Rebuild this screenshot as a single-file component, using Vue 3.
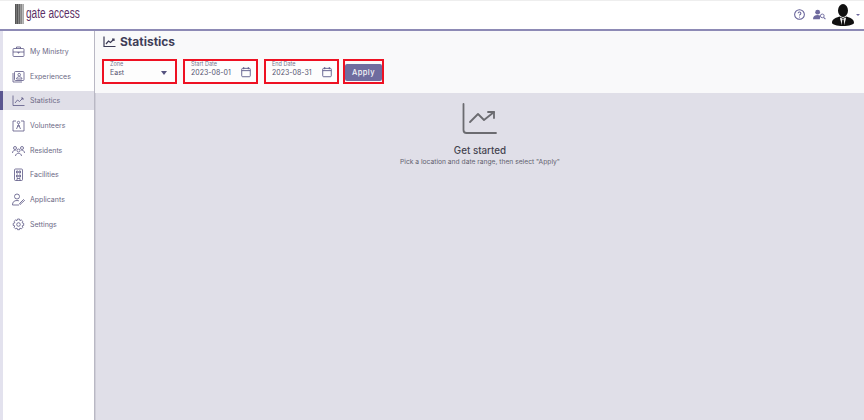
<script setup>
const items = [
  { label: 'My Ministry', icon: 'brief' },
  { label: 'Experiences', icon: 'exp' },
  { label: 'Statistics', icon: 'chart', active: true },
  { label: 'Volunteers', icon: 'vol' },
  { label: 'Residents', icon: 'res' },
  { label: 'Facilities', icon: 'fac' },
  { label: 'Applicants', icon: 'app' },
  { label: 'Settings', icon: 'set' },
]
const bars = ['#555', '#777', '#555', '#888', '#666', '#999', '#888', '#bbb', '#aaa']
</script>

<template>
  <div class="page">
    <header class="top">
      <div class="logo">
        <div class="bars"><i v-for="(b, i) in bars" :key="i" :style="{ background: b }"></i></div>
        <span class="logotext">gate access</span>
      </div>
      <div class="topright">
        <svg class="help" width="11" height="11" viewBox="0 0 12 12" fill="none" stroke="#5f5b94" stroke-width="1.100">
          <circle cx="6" cy="6" r="5.300" />
          <path d="M4.500 4.700a1.500 1.500 0 1 1 2.300 1.300c-.6.4-.8.6-.8 1.200" />
          <path d="M6 8.400v.9" />
        </svg>
        <svg class="usr" width="13" height="11" viewBox="0 0 14 11" fill="#6e6a9e">
          <circle cx="5" cy="3" r="2.600" />
          <path d="M0 10.500c0-3 2-4.400 5-4.400 1.200 0 2 .2 2.800.7l-.4 3.700z" />
          <circle cx="10" cy="7" r="2" fill="#fff" stroke="#6e6a9e" stroke-width="1" />
          <path d="M11.400 8.500l2 2" stroke="#6e6a9e" stroke-width="1.100" />
        </svg>
        <svg class="avatar" width="22" height="22" viewBox="0 0 22 22">
          <path d="M0 19c0-3.500 2-4.500 7.500-6.500L11 14l3.500-1.500C20 14.500 22 15.500 22 19c0 1.500-5 3-11 3S0 20.500 0 19z" fill="#111" />
          <ellipse cx="11" cy="6.500" rx="5" ry="6.500" fill="#111" />
          <path d="M8.500 13.500L11 15l2.500-1.500.5 1-2 7h-2l-2-7z" fill="#eee" />
          <path d="M10.300 15.500h1.400l.7 6.500h-2.800z" fill="#111" />
        </svg>
        <span class="caret small"></span>
      </div>
    </header>
    <div class="body">
      <aside class="side">
        <div v-for="it in items" :key="it.label" class="item" :class="{ active: it.active }">
          <svg class="ic" width="13" height="13" viewBox="0 0 13 13" fill="none" stroke="#5a5784" stroke-width=".8">
            <template v-if="it.icon === 'brief'">
              <rect x="1" y="3.500" width="11" height="8" rx="1" /><path d="M4.500 3.500V2h4v1.500M1 7h11M6 7v1h1V7" />
            </template>
            <template v-else-if="it.icon === 'exp'">
              <rect x="2.500" y="1.500" width="9.500" height="9" rx="1" /><path d="M1 3v9h9" /><circle cx="7.200" cy="4.700" r="1.300" /><path d="M4.500 9c0-3 5.500-3 5.500 0z" />
            </template>
            <template v-else-if="it.icon === 'chart'">
              <path d="M1 1.500V11.500H12.500" /><path d="M3 9l2.500-3 2 1.500L11 4M9 4h2v2" />
            </template>
            <template v-else-if="it.icon === 'vol'">
              <path d="M4 2H1v10h11V2H9" /><circle cx="6.500" cy="3.500" r="1.200" /><path d="M4.500 10l2-4.500 2 4.500M5 7h3" />
            </template>
            <template v-else-if="it.icon === 'res'">
              <circle cx="3" cy="4" r="1.500" /><circle cx="10" cy="4" r="1.500" /><circle cx="6.500" cy="6.500" r="1.500" /><path d="M.5 9c0-2 1.500-3 3-2.500M12.500 9c0-2-1.500-3-3-2.500M3.500 12c0-3.500 6-3.500 6 0" />
            </template>
            <template v-else-if="it.icon === 'fac'">
              <rect x="2.500" y="1" width="8" height="11.500" rx="1" /><path d="M4.500 3h1.500v2H4.500zM7 3h1.500v2H7zM4.500 7h1.500v2H4.500zM7 7h1.500v2H7zM5 12.500v-2h3v2" />
            </template>
            <template v-else-if="it.icon === 'app'">
              <circle cx="5" cy="3.500" r="2.500" /><path d="M.5 12c0-3 1.500-4.500 4.500-4.500 1 0 1.500.2 2 .4M.5 12H7" /><path d="M8 11.500l4.500-4-1-1L7.500 10.500z" />
            </template>
            <template v-else>
              <circle cx="6.500" cy="6.500" r="1.800" /><path d="M5.500 1h2l.4 1.600 1.500-.6 1.400 1.400-.7 1.400 1.600.6v2l-1.600.5.7 1.500-1.400 1.400-1.500-.7-.4 1.600h-2l-.5-1.600-1.500.7L2.100 9.400l.7-1.500L1.200 7.400v-2l1.600-.6-.7-1.400L3.500 2l1.500.6z" />
            </template>
          </svg>
          <span>{{ it.label }}</span>
        </div>
      </aside>
      <main class="main">
        <section class="toolbar">
          <div class="title">
            <svg width="13" height="13" viewBox="0 0 13 13" fill="none" stroke="#3b3a55" stroke-width="1.200">
              <path d="M1 1.500V11.500H12.500" /><path d="M3 9l2.500-3 2 1.500L11 4M9 4h2v2" />
            </svg>
            <h1>Statistics</h1>
          </div>
          <div class="filters">
            <div class="field zone">
              <label>Zone</label>
              <span class="val">East</span>
              <span class="caret"></span>
            </div>
            <div class="field date">
              <label>Start Date</label>
              <span class="val">2023-08-01</span>
              <svg class="cal" width="10" height="12" viewBox="0 0 11 12" fill="none" stroke="#5c5a8a" stroke-width="1">
                <rect x=".8" y="2" width="9.400" height="9.200" rx="1" /><path d="M.8 4.500h9.400M3 .5v2.500M8 .5v2.500" />
              </svg>
            </div>
            <div class="field date">
              <label>End Date</label>
              <span class="val">2023-08-31</span>
              <svg class="cal" width="10" height="12" viewBox="0 0 11 12" fill="none" stroke="#5c5a8a" stroke-width="1">
                <rect x=".8" y="2" width="9.400" height="9.200" rx="1" /><path d="M.8 4.500h9.400M3 .5v2.500M8 .5v2.500" />
              </svg>
            </div>
            <div class="applywrap"><button class="apply">Apply</button></div>
          </div>
        </section>
        <section class="empty">
          <svg width="36" height="32" viewBox="0 0 36 32" fill="none" stroke="#6b6b70" stroke-width="1.800" stroke-linecap="round" stroke-linejoin="round">
            <path d="M1.500 1V27a3 3 0 0 0 3 3H34" />
            <path d="M8 19l8-8 6 6 10-8" /><path d="M26 9H32V15" />
          </svg>
          <h2>Get started</h2>
          <p>Pick a location and date range, then select "Apply"</p>
        </section>
      </main>
    </div>
  </div>
</template>

<style>
html, body { margin: 0; background: #fff; }
</style>
<style scoped>
.page {
  width: 864px; height: 420px; display: flex; flex-direction: column; overflow: hidden;
  font-family: Inter, "Liberation Sans", sans-serif; color: #4a4865;
}
.top {
  height: 28px; flex: none; display: flex; justify-content: space-between; align-items: center;
  border-top: 1px solid #eee; border-bottom: 2px solid #8d8ab5; box-sizing: content-box; background: #fff;
}
.logo { display: flex; align-items: center; margin-left: 15px; gap: 2px; margin-bottom: 2px; }
.bars { display: flex; height: 20px; width: 9px; overflow: hidden; }
.bars i { width: 1px; flex: none; }
.logotext { font-family: "Liberation Sans", sans-serif; font-size: 14px; color: #5b2f66; transform: scaleX(.72); transform-origin: left; margin-bottom: 2px; }
.topright { display: flex; align-items: center; margin-right: 4px; }
.help { margin-bottom: 2px; }
.usr { margin-left: 8px; margin-bottom: 2px; }
.avatar { margin-left: 6px; }
.caret { width: 0; height: 0; border-left: 3.500px solid transparent; border-right: 3.500px solid transparent; border-top: 4px solid #55537f; }
.caret.small { border-width: 2.500px 2.500px 0; margin-left: 2px; border-top-color: #6e6a9e; }
.body { flex: 1; display: flex; min-height: 0; }
.side {
  width: 91px; flex: none; border-left: 3px solid #e3e2ee; border-right: 1px solid #b9b8c4;
  padding-top: 11px; background: #fff; display: flex; flex-direction: column;
}
.item {
  height: 18.700px; margin-bottom: 6px; display: flex; align-items: center; gap: 5px; padding-left: 9px;
  font-size: 7px; color: #6b6985; position: relative; white-space: nowrap;
}
.item .ic { flex: none; }
.item.active { background: #e0dfe8; }
.item.active::before { content: ""; position: absolute; left: -3px; top: 0; bottom: 0; width: 3px; background: #5a5690; }
.main { flex: 1; display: flex; flex-direction: column; min-width: 0; }
.toolbar { height: 62px; flex: none; background: #f9f9fa; padding: 4px 0 0 8px; box-sizing: border-box; }
.title { display: flex; align-items: center; gap: 4px; height: 13px; }
.title h1 { margin: 0; font-size: 12px; font-weight: 700; color: #3f3e58; line-height: 13px; }
.filters { display: flex; margin-top: 11px; align-items: flex-start; }
.field {
  position: relative; height: 25px; box-sizing: border-box; border: 2px solid #ee1122; background: #fdfdfd;
}
.zone { width: 75px; margin-left: -1px; }
.date { width: 75px; margin-left: 6px; }
.field label { position: absolute; left: 6px; top: 0; font-size: 5.500px; color: #77758c; }
.val { position: absolute; left: 6px; top: 7px; font-size: 7px; color: #55536f; }
.zone .caret { position: absolute; right: 8px; top: 10px; }
.cal { position: absolute; right: 5px; top: 5px; }
.applywrap { margin-left: 4px; border: 2px solid #ee1122; height: 25px; width: 41px; box-sizing: border-box; padding: 3px 0 0 0; display: flex; justify-content: center; }
.apply {
  display: block; width: 37px; height: 17px; border: 0; border-radius: 2px; background: #6f6c9f; color: #f3f3f8;
  font-family: inherit; font-size: 7.500px; font-weight: 500; padding: 0; letter-spacing: .4px;
}
.empty {
  flex: 1; background: #e0dfe8; display: flex; flex-direction: column; align-items: center; padding-top: 10px;
  border-left: 1px solid #cfced8;
}
.empty svg { flex: none; }
.empty h2 { margin: 8.500px 0 0; font-size: 9.800px; font-weight: 500; color: #44434f; line-height: 13px; }
.empty p { margin: .5px 0 0; font-size: 6.700px; color: #62616f; line-height: 10px; }
</style>
